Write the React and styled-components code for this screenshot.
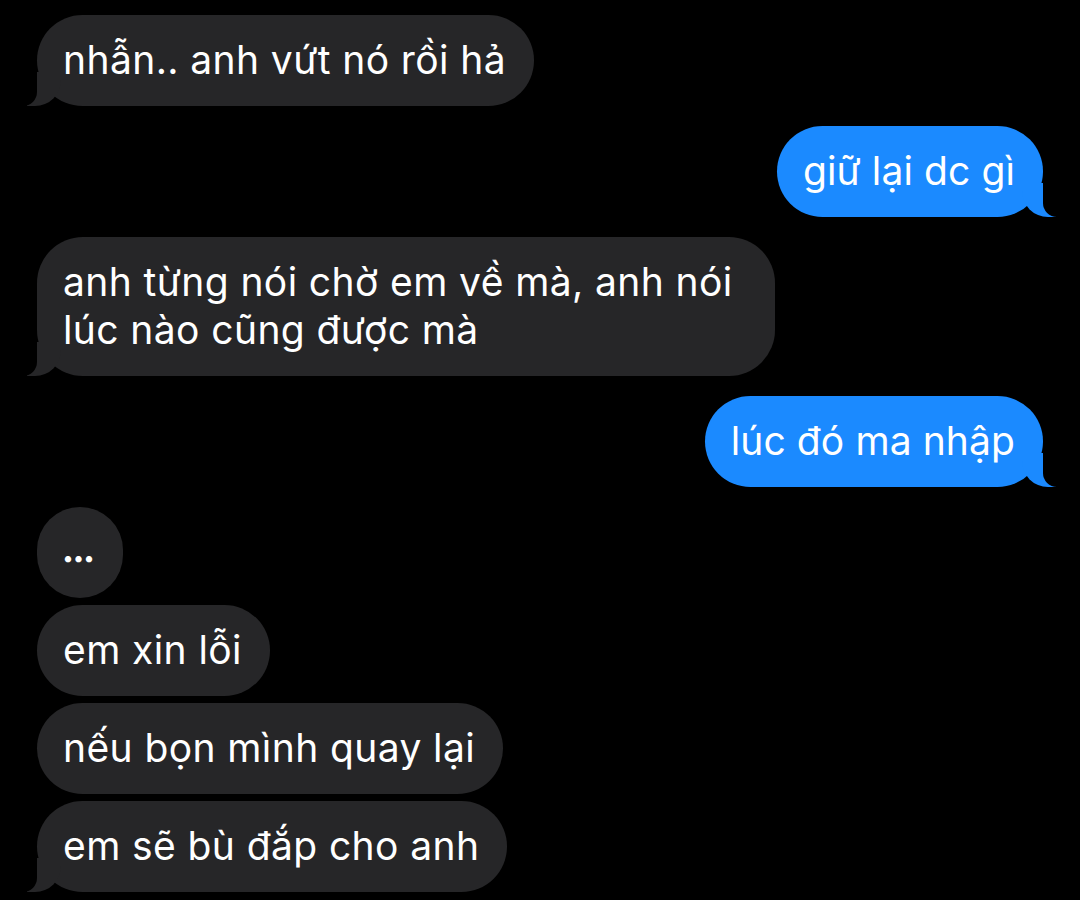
import React from 'react'
import styled, { createGlobalStyle, css } from 'styled-components'

const GlobalStyle = createGlobalStyle`
	html, body {
		margin: 0;
		padding: 0;
		background: #000;
	}
	body {
		font-family: Inter, 'Noto Sans', 'DejaVu Sans', sans-serif;
	}
`

const GREY = '#262628'
const BLUE = '#1b8aff'

const Thread = styled.div`
	width: 1080px;
	height: 900px;
	box-sizing: border-box;
	padding: 15px 37px 0;
	display: flex;
	flex-direction: column;
	background: #000;
	overflow: hidden;
`

const Row = styled.div`
	display: flex;
	justify-content: ${(p) => (p.$me ? 'flex-end' : 'flex-start')};
	margin-top: ${(p) => (p.$first ? '20px' : '7px')};
	&:first-child {
		margin-top: 0;
	}
`

const tailLeft = css`
	&::before {
		content: '';
		position: absolute;
		bottom: 0;
		left: -10px;
		width: 34px;
		height: 34px;
		background: ${GREY};
		border-bottom-right-radius: 26px;
	}
	&::after {
		content: '';
		position: absolute;
		bottom: 0;
		left: -14px;
		width: 14px;
		height: 34px;
		background: #000;
		border-bottom-right-radius: 14px;
	}
`

const tailRight = css`
	&::before {
		content: '';
		position: absolute;
		bottom: 0;
		right: -13px;
		width: 34px;
		height: 34px;
		background: ${BLUE};
		border-bottom-left-radius: 26px;
	}
	&::after {
		content: '';
		position: absolute;
		bottom: 0;
		right: -17px;
		width: 17px;
		height: 34px;
		background: #000;
		border-bottom-left-radius: 14px;
	}
`

const Bubble = styled.div`
	position: relative;
	max-width: 684px;
	padding: 21px 28px 22px 26px;
	border-radius: 46px;
	background: ${(p) => (p.$me ? BLUE : GREY)};
	color: #fff;
	font-size: 39px;
	line-height: 48px;
	letter-spacing: ${(p) => (p.$me ? '0.1px' : '0.4px')};
	z-index: 0;
	${(p) => p.$tail && (p.$me ? tailRight : tailLeft)}
	&::before,
	&::after {
		z-index: -1;
	}
`

const Dots = styled.span`
	display: block;
	width: 32px;
	height: 48px;
	font-weight: 700;
	font-size: 20px;
	line-height: 48px;
	letter-spacing: 1px;
	text-align: center;
	transform: translateY(6px);
`

const messages = [
	{ text: 'nhẫn.. anh vứt nó rồi hả', tail: true },
	{ text: 'giữ lại dc gì', me: true, tail: true },
	{ text: 'anh từng nói chờ em về mà, anh nói lúc nào cũng được mà', tail: true },
	{ text: 'lúc đó ma nhập', me: true, tail: true },
	{ text: '...', dots: true },
	{ text: 'em xin lỗi' },
	{ text: 'nếu bọn mình quay lại' },
	{ text: 'em sẽ bù đắp cho anh', tail: true },
]

const App = () => {
	return (
		<>
			<GlobalStyle />
			<Thread>
				{messages.map((m, i) => {
					const prev = messages[i - 1]
					const first = !prev || !!prev.me !== !!m.me
					return (
						<Row key={i} $me={m.me} $first={first}>
							<Bubble $me={m.me} $tail={m.tail}>
								{m.dots ? <Dots>•••</Dots> : m.text}
							</Bubble>
						</Row>
					)
				})}
			</Thread>
		</>
	)
}

export default App
